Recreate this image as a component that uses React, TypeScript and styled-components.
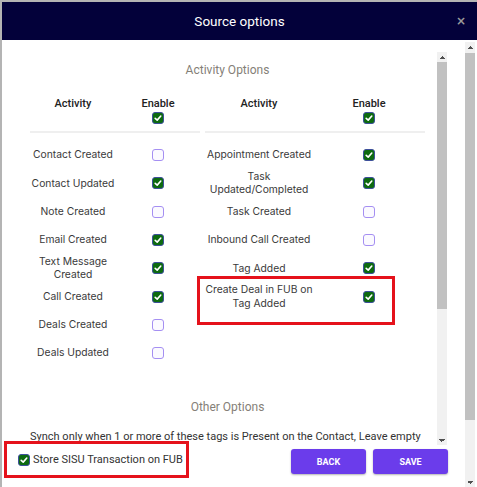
import React from 'react';
import styled, { createGlobalStyle, css } from 'styled-components';

const GlobalStyle = createGlobalStyle`
    html, body {
        margin: 0;
        padding: 0;
        background: #b4b4b4;
        font-family: Roboto, "Liberation Sans", sans-serif;
    }
    * { box-sizing: border-box; }
`

const Modal = styled.div`
    margin: 2px 0 0 2px;
    width: 475px;
    height: 485px;
    background: #fff;
    display: flex;
    flex-direction: column;
`

const Header = styled.div`
    height: 38px;
    flex-shrink: 0;
    background: #03013a;
    display: grid;
    grid-template-columns: 1fr auto 1fr;
    align-items: center;
`

const Title = styled.div`
    grid-column: 2;
    color: #fff;
    font-size: 13.5px;
`

const Close = styled.div`
    justify-self: end;
    margin-right: 11px;
    color: #9a9a9a;
    font-size: 12px;
    font-weight: 700;
    font-family: "DejaVu Sans", sans-serif;
`

const Body = styled.div`
    flex: 1;
    display: flex;
    min-height: 0;
`

const Main = styled.div`
    flex: 1;
    min-width: 0;
    overflow: hidden;
    padding-top: 12px;
`

const Bar = styled.div<{ $top?: number; $right?: number }>`
    width: 10px;
    flex-shrink: 0;
    margin-top: ${p => p.$top ?? 0}px;
    margin-right: ${p => p.$right ?? 0}px;
    background: #f1f1f1;
    display: flex;
    flex-direction: column;
`

const Arrow = styled.div<{ $down?: boolean }>`
    height: 10px;
    flex-shrink: 0;
    background-repeat: no-repeat;
    background-position: center;
    background-size: 6px 3px;
    background-image: ${p => p.$down
        ? 'conic-gradient(from -45deg at 50% 100%, #505050 90deg, transparent 0)'
        : 'conic-gradient(from 135deg at 50% 0, #505050 90deg, transparent 0)'};
`

const Rail = styled.div`
    flex: 1;
`

const Thumb = styled.div<{ $offset: number; $size: number }>`
    margin-top: ${p => p.$offset}px;
    height: ${p => p.$size}px;
    background: #c1c1c1;
`

function Scrollbar({ offset, size, top, right }: { offset: number; size: number; top?: number; right?: number }) {
    return (
        <Bar $top={top} $right={right}>
            <Arrow />
            <Rail><Thumb $offset={offset} $size={size} /></Rail>
            <Arrow $down />
        </Bar>
    )
}

const InnerWrap = styled.div`
    height: 393px;
    margin-right: 18px;
    display: flex;
`

const Inner = styled.div`
    flex: 1;
    min-width: 0;
    overflow: hidden;
    padding: 10px 12px 0 28px;
`

const SectionTitle = styled.div<{ $top: number }>`
    margin-top: ${p => p.$top}px;
    text-align: center;
    color: #857f78;
    font-size: 12px;
    line-height: 16px;
`

const Tables = styled.div`
    display: flex;
    gap: 5px;
    margin-top: 19px;
    align-items: flex-start;
`

const Table = styled.div<{ $label: number; $enable: number }>`
    display: grid;
    grid-template-columns: ${p => p.$label}px ${p => p.$enable}px;
`

const HeadCell = styled.div`
    display: flex;
    flex-direction: column;
    align-items: center;
    gap: 2px;
    padding-bottom: 7px;
    border-bottom: 2px solid #efefef;
    margin-bottom: 8px;
    font-size: 11px;
    font-weight: 500;
    color: #222;
    line-height: 13px;
`

const Row = styled.div<{ $marked?: boolean }>`
    grid-column: 1 / 3;
    display: grid;
    grid-template-columns: subgrid;
    height: 28.3px;
    align-items: center;
    position: relative;
    ${p => p.$marked && css`
        &::after {
            content: '';
            position: absolute;
            left: -8px;
            top: -6px;
            width: 192px;
            height: 43px;
            border: 3px solid #e5121b;
        }
    `}
`

const Label = styled.div`
    font-family: Inter, "Liberation Sans", sans-serif;
    font-size: 10.3px;
    line-height: 13.5px;
    color: #3a3a3a;
    text-align: center;
    white-space: pre;
`

const BoxCell = styled.div`
    display: flex;
    justify-content: center;
`

const Box = styled.span<{ $checked: boolean }>`
    width: 12px;
    height: 12px;
    border-radius: 3px;
    display: inline-flex;
    align-items: center;
    justify-content: center;
    flex-shrink: 0;
    ${p => p.$checked
        ? css`background: #0d6a10; border: 1px solid #3d4f9c;`
        : css`background: #fbfaff; border: 1.5px solid #a58ff2;`}
`

const Paragraph = styled.p`
    margin: 15px 0 0;
    font-size: 11px;
    line-height: 14px;
    color: #333;
`

const Footer = styled.div`
    display: flex;
    justify-content: space-between;
    align-items: flex-start;
    padding: 0 17px 0 2px;
`

const StoreLabel = styled.label`
    margin-top: -4px;
    height: 37px;
    display: flex;
    align-items: center;
    gap: 3px;
    padding: 0 3px 0 11px;
    border: 3px solid #e5121b;
    font-size: 11px;
    color: #333;
    background: #fff;
    position: relative;
`

const Buttons = styled.div`
    display: flex;
    gap: 7px;
    margin-top: 4px;
`

const Button = styled.button`
    width: 75px;
    height: 25px;
    border: none;
    border-radius: 3px;
    background: #6b3ceb;
    color: #fff;
    font-family: Roboto, sans-serif;
    font-weight: 700;
    font-size: 9px;
    box-shadow: 0 1px 2px rgba(0,0,0,.3);
`

function Check({ checked }: { checked: boolean }) {
    return (
        <Box $checked={checked}>
            {checked && (
                <svg width="8" height="8" viewBox="0 0 8 8">
                    <polyline points="1.2,4.3 3.2,6.1 6.8,2" fill="none" stroke="#fff" strokeWidth="1.6" strokeLinecap="round" strokeLinejoin="round" />
                </svg>
            )}
        </Box>
    )
}

type Activity = { label: string; on: boolean; marked?: boolean }

const left: Activity[] = [
    { label: 'Contact Created', on: false },
    { label: 'Contact Updated', on: true },
    { label: 'Note Created', on: false },
    { label: 'Email Created', on: true },
    { label: 'Text Message\nCreated', on: true },
    { label: 'Call Created', on: true },
    { label: 'Deals Created', on: false },
    { label: 'Deals Updated', on: false },
]

const right: Activity[] = [
    { label: 'Appointment Created', on: true },
    { label: 'Task\nUpdated/Completed', on: true },
    { label: 'Task Created', on: false },
    { label: 'Inbound Call Created', on: false },
    { label: 'Tag Added', on: true },
    { label: 'Create Deal in FUB on\nTag Added', on: true, marked: true },
]

function ActivityTable({ rows, label, enable }: { rows: Activity[]; label: number; enable: number }) {
    return (
        <Table $label={label} $enable={enable}>
            <HeadCell>Activity</HeadCell>
            <HeadCell>
                Enable
                <Check checked />
            </HeadCell>
            {rows.map(r => (
                <Row key={r.label} $marked={r.marked}>
                    <Label>{r.label}</Label>
                    <BoxCell><Check checked={r.on} /></BoxCell>
                </Row>
            ))}
        </Table>
    )
}

export default function App() {
    return (
        <>
            <GlobalStyle />
            <Modal>
                <Header>
                    <Title>Source options</Title>
                    <Close>×</Close>
                </Header>
                <Body>
                    <Main>
                        <InnerWrap>
                            <Inner>
                                <SectionTitle $top={0}>Activity Options</SectionTitle>
                                <Tables>
                                    <ActivityTable rows={left} label={86} enable={84} />
                                    <ActivityTable rows={right} label={108} enable={112} />
                                </Tables>
                                <SectionTitle $top={32}>Other Options</SectionTitle>
                                <Paragraph>
                                    Synch only when 1 or more of these tags is Present on the Contact, Leave empty
                                    to synch all contacts
                                </Paragraph>
                            </Inner>
                            <Scrollbar offset={0} size={247} />
                        </InnerWrap>
                        <Footer>
                            <StoreLabel>
                                <Check checked />
                                Store SISU Transaction on FUB
                            </StoreLabel>
                            <Buttons>
                                <Button>BACK</Button>
                                <Button>SAVE</Button>
                            </Buttons>
                        </Footer>
                    </Main>
                    <Scrollbar offset={1} size={367} top={2} right={2} />
                </Body>
            </Modal>
        </>
    )
}
